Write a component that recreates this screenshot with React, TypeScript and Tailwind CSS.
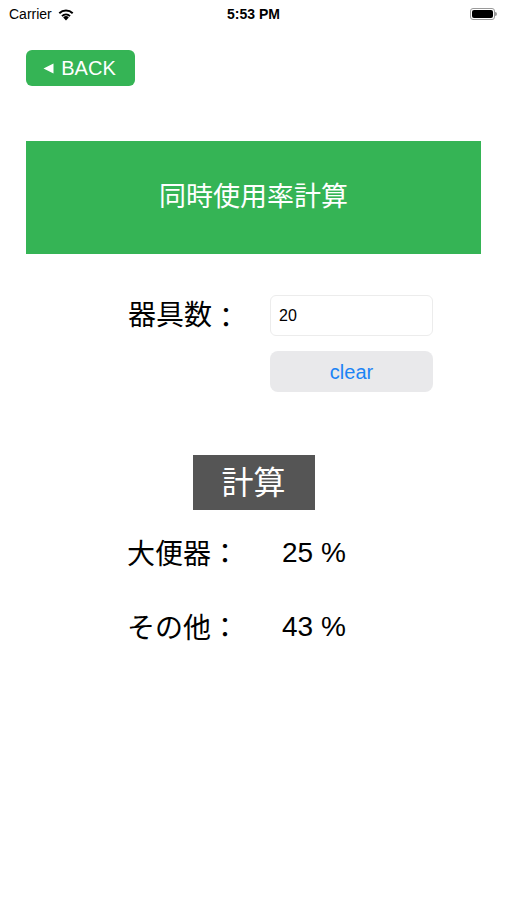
import { useState } from "react";

const jp = { fontFamily: '"Liberation Sans", "Noto Sans CJK JP", sans-serif' };
const tc = { fontFamily: '"Noto Sans CJK TC", sans-serif' };

function Colon() {
  return <span style={tc}>：</span>;
}

function StatusBar() {
  return (
    <div className="flex h-[28px] items-center justify-between px-[9px] text-[14px] text-black" style={jp}>
      <div className="flex w-[120px] items-center gap-[5px]">
        <span>Carrier</span>
        <svg width="18" height="13" viewBox="0 0 18 13">
          <path d="M9 12.5 L6.2 9.4 A4 4 0 0 1 11.8 9.4 Z" fill="#000" />
          <path d="M4.3 7.4 A6.8 6.8 0 0 1 13.7 7.4 L12.4 8.8 A5 5 0 0 0 5.6 8.8 Z" fill="#000" />
          <path d="M1.6 4.6 A10.5 10.5 0 0 1 16.4 4.6 L15 6 A8.6 8.6 0 0 0 3 6 Z" fill="#000" />
        </svg>
      </div>
      <span className="font-semibold">5:53 PM</span>
      <div className="flex w-[120px] justify-end pr-[1px]">
        <div className="flex items-center">
          <div className="h-[12px] w-[25px] rounded-[3px] border border-[#9a9a9a] p-[1px]">
            <div className="h-full w-full rounded-[2px] bg-black" />
          </div>
          <div className="h-[4px] w-[2px] rounded-r-sm bg-[#9a9a9a]" />
        </div>
      </div>
    </div>
  );
}

export default function App() {
  const [count, setCount] = useState("20");

  return (
    <div className="h-[900px] w-[507px] bg-white" style={jp}>
      <StatusBar />

      {/* Back */}
      <div className="px-[26px] pt-[22px]">
        <button className="flex h-[36px] w-[109px] items-center justify-center gap-[7px] rounded-[6px] bg-[#35b455] pr-[2px] text-[20px] text-white">
          <svg width="11" height="11" viewBox="0 0 11 11">
            <path d="M0.5 5.5 L10.5 0.5 L10.5 10.5 Z" fill="#fff" />
          </svg>
          <span>BACK</span>
        </button>
      </div>

      {/* Title banner */}
      <div className="mx-[26px] mt-[55px] flex h-[113px] items-center justify-center bg-[#35b455] text-[27px] text-white">
        同時使用率計算
      </div>

      {/* Input row */}
      <div className="mt-[41px] flex pl-[128px]">
        <div className="flex h-[41px] w-[142px] items-center text-[28px] text-black">
          器具数<Colon />
        </div>
        <div className="flex w-[163px] flex-col gap-[15px]">
          <input
            value={count}
            onChange={(e) => setCount(e.target.value)}
            className="h-[41px] w-full rounded-[6px] border border-[#ececec] px-[8px] text-[16px] text-black outline-none"
          />
          <button className="h-[41px] w-full rounded-[8px] bg-[#e9e9eb] text-[20px] text-[#1c84f5]">clear</button>
        </div>
      </div>

      {/* Calc */}
      <div className="mt-[63px] flex justify-center">
        <button className="flex h-[55px] w-[122px] items-center justify-center bg-[#555555] text-[32px] text-white">
          計算
        </button>
      </div>

      {/* Results */}
      <div className="mt-[24px] flex flex-col gap-[36px] pl-[127px] text-[28px] text-black">
        <div className="flex h-[38px] items-center">
          <span className="w-[155px]">
            大便器<Colon />
          </span>
          <span>25 %</span>
        </div>
        <div className="flex h-[38px] items-center">
          <span className="w-[155px]">
            その他<Colon />
          </span>
          <span>43 %</span>
        </div>
      </div>
    </div>
  );
}
